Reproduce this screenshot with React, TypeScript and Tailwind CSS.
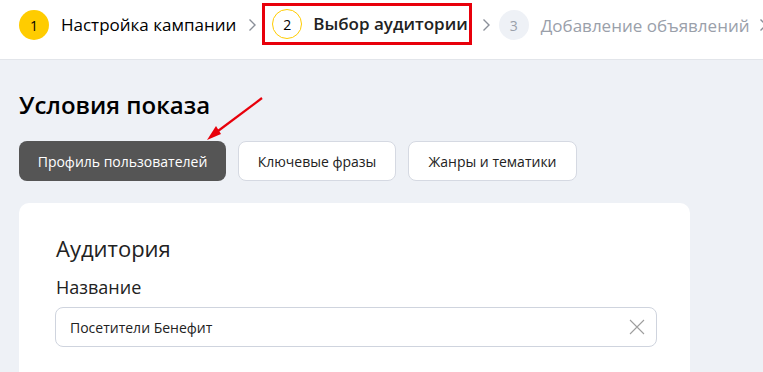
function Chevron({ className = '' }: { className?: string }) {
  return (
    <svg width="9" height="14" viewBox="0 0 9 14" className={`shrink-0 ${className}`}>
      <path d="M1.5 1.5 L7 7 L1.5 12.5" fill="none" stroke="#8a8f99" strokeWidth="1.4" />
    </svg>
  )
}

export default function App() {
  return (
    <div className="flex h-[372px] w-[763px] flex-col overflow-hidden bg-[#eef1f6] font-['Open_Sans',sans-serif]">
      {/* steps */}
      <div className="flex h-[60px] shrink-0 items-start whitespace-nowrap border-b border-[#e2e5ea] bg-white pl-[19px] pt-[10px]">
        <div className="flex h-[30px] shrink-0 items-center">
          <div className="flex h-[30px] w-[30px] shrink-0 items-center justify-center rounded-full bg-[#ffcc00] text-[14px] text-black">1</div>
          <span className="ml-[12px] text-[17px] text-black">Настройка кампании</span>
        </div>
        <Chevron className="ml-[12px] mt-[8px]" />
        <div className="-mt-[7px] ml-[5px] flex h-[42px] shrink-0 items-center border-[3px] border-[#e8000b] pl-[7px] pr-[1px]">
          <div className="flex h-[30px] w-[30px] shrink-0 items-center justify-center rounded-full border-[1.5px] border-[#ffcc00] text-[14px] text-black">2</div>
          <span className="ml-[11px] text-[17px] font-semibold text-[#222]">Выбор аудитории</span>
        </div>
        <Chevron className="ml-[10px] mt-[8px]" />
        <div className="ml-[8px] flex h-[30px] w-[30px] shrink-0 items-center justify-center rounded-full bg-[#eef1f6] text-[14px] text-[#9aa0aa]">3</div>
        <span className="ml-[12px] mt-[3px] text-[17px] text-[#9aa0aa]">Добавление объявлений</span>
        <Chevron className="ml-[9px] mt-[8px]" />
      </div>

      <div className="relative flex flex-col px-[19px]">
        <h1 className="mt-[29px] text-[24px] font-semibold leading-[32px] text-black">Условия показа</h1>

        <svg className="absolute left-[200px] top-[30px]" width="70" height="55" viewBox="0 0 70 55">
          <line x1="62" y1="8" x2="14" y2="44" stroke="#e8000b" strokeWidth="2.2" />
          <path d="M7 50 L16 36 L21 44 Z" fill="#e8000b" />
        </svg>

        <div className="mt-[20px] flex gap-[12px]">
          <button className="h-[40px] w-[207px] rounded-[8px] bg-[#555555] text-[14px] text-white">Профиль пользователей</button>
          <button className="h-[40px] w-[158px] rounded-[8px] border border-[#d5d9e2] bg-white text-[14px] text-[#222]">Ключевые фразы</button>
          <button className="h-[40px] w-[169px] rounded-[8px] border border-[#d5d9e2] bg-white text-[14px] text-[#222]">Жанры и тематики</button>
        </div>

        <div className="mt-[22px] flex w-[671px] flex-col rounded-[10px] bg-white px-[37px] pb-[40px] pt-[30px]">
          <h2 className="text-[22px] leading-[30px] text-[#222]">Аудитория</h2>
          <div className="mt-[12px] text-[18px] leading-[24px] text-[#222]">Название</div>
          <div className="-ml-px mt-[8px] flex h-[40px] w-[602px] items-center justify-between rounded-[8px] border border-[#cfd4de] pl-[14px] pr-[11px]">
            <span className="text-[14px] text-[#222]">Посетители Бенефит</span>
            <svg width="16" height="16" viewBox="0 0 16 16">
              <path d="M1 1 L15 15 M15 1 L1 15" stroke="#9e9e9e" strokeWidth="1.1" />
            </svg>
          </div>
        </div>
      </div>
    </div>
  )
}
